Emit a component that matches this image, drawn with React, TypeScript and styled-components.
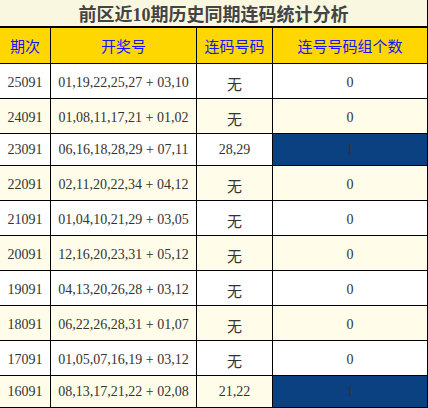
import * as React from 'react'
import styled, { createGlobalStyle } from 'styled-components'

const GlobalStyle = createGlobalStyle`
  html, body {
    margin: 0;
    padding: 0;
    background: #ffffff;
  }
`

const border = '#000000'
const cream = '#fffde9'
const titleCream = '#faf7e0'
const gold = '#ffd700'
const navy = '#0b4180'

const Grid = styled.div`
  display: grid;
  grid-template-columns: 51px 146px 76px 155px;
  width: 428px;
  font-family: 'Liberation Serif', 'Noto Sans CJK SC', serif;
  font-size: 14px;
  color: #333333;
`

const Title = styled.div`
  grid-column: 1 / -1;
  height: 28px;
  box-sizing: border-box;
  background: ${titleCream};
  border-right: 1px solid ${border};
  border-bottom: 2px solid ${border};
  display: flex;
  align-items: center;
  justify-content: center;
  font-family: 'Liberation Serif', 'Noto Sans CJK SC', serif;
  font-size: 18px;
  font-weight: bold;
  color: #444444;
`

const HeadCell = styled.div`
  height: 36px;
  box-sizing: border-box;
  background: ${gold};
  border-right: 1px solid ${border};
  border-bottom: 1px solid ${border};
  display: flex;
  align-items: center;
  justify-content: center;
  font-family: 'Noto Sans CJK SC', sans-serif;
  font-size: 15px;
  color: #1414ff;
`

const Cell = styled.div<{ $tall: boolean; $bg: string; $cjk?: boolean }>`
  height: ${({ $tall }) => ($tall ? '35px' : '32px')};
  box-sizing: border-box;
  background: ${({ $bg }) => $bg};
  border-right: 1px solid ${border};
  border-bottom: 1px solid ${border};
  display: flex;
  align-items: center;
  justify-content: center;
  white-space: nowrap;
  font-family: ${({ $cjk }) =>
    $cjk
      ? "'Noto Sans CJK SC', sans-serif"
      : "'Liberation Serif', 'Noto Sans CJK SC', serif"};
  font-size: ${({ $cjk }) => ($cjk ? '15px' : '14px')};
  padding-top: ${({ $tall, $cjk }) => ($cjk ? '5px' : $tall ? '3px' : '0')};
`

interface Draw {
  issue: string
  numbers: string
  consecutive: string
  groups: number
}

const draws: Draw[] = [
  { issue: '25091', numbers: '01,19,22,25,27 + 03,10', consecutive: '无', groups: 0 },
  { issue: '24091', numbers: '01,08,11,17,21 + 01,02', consecutive: '无', groups: 0 },
  { issue: '23091', numbers: '06,16,18,28,29 + 07,11', consecutive: '28,29', groups: 1 },
  { issue: '22091', numbers: '02,11,20,22,34 + 04,12', consecutive: '无', groups: 0 },
  { issue: '21091', numbers: '01,04,10,21,29 + 03,05', consecutive: '无', groups: 0 },
  { issue: '20091', numbers: '12,16,20,23,31 + 05,12', consecutive: '无', groups: 0 },
  { issue: '19091', numbers: '04,13,20,26,28 + 03,12', consecutive: '无', groups: 0 },
  { issue: '18091', numbers: '06,22,26,28,31 + 01,07', consecutive: '无', groups: 0 },
  { issue: '17091', numbers: '01,05,07,16,19 + 03,12', consecutive: '无', groups: 0 },
  { issue: '16091', numbers: '08,13,17,21,22 + 02,08', consecutive: '21,22', groups: 1 },
]

export default function App() {
  return (
    <>
      <GlobalStyle />
      <Grid>
        <Title>前区近10期历史同期连码统计分析</Title>
        <HeadCell>期次</HeadCell>
        <HeadCell>开奖号</HeadCell>
        <HeadCell>连码号码</HeadCell>
        <HeadCell>连号号码组个数</HeadCell>
        {draws.map((d, i) => {
          const rowBg = i % 2 === 0 ? '#ffffff' : cream
          const tall = d.consecutive === '无'
          return (
            <React.Fragment key={d.issue}>
              <Cell $tall={tall} $bg={rowBg}>{d.issue}</Cell>
              <Cell $tall={tall} $bg={rowBg}>{d.numbers}</Cell>
              <Cell $tall={tall} $bg={rowBg} $cjk={tall}>
                {d.consecutive}
              </Cell>
              <Cell $tall={tall} $bg={d.groups > 0 ? navy : rowBg}>
                {d.groups}
              </Cell>
            </React.Fragment>
          )
        })}
      </Grid>
    </>
  )
}
